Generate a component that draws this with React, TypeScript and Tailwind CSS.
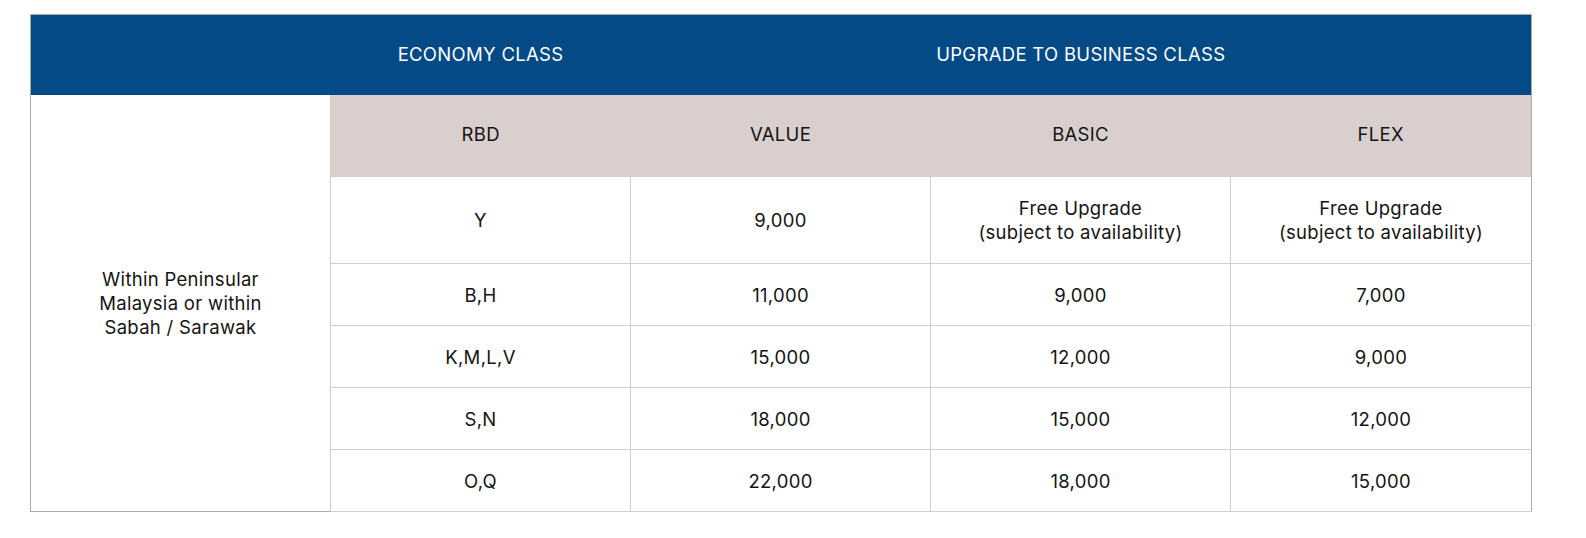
import React from 'react';

const rows = [
  { rbd: 'Y', value: '9,000', basic: 'free', flex: 'free' },
  { rbd: 'B,H', value: '11,000', basic: '9,000', flex: '7,000' },
  { rbd: 'K,M,L,V', value: '15,000', basic: '12,000', flex: '9,000' },
  { rbd: 'S,N', value: '18,000', basic: '15,000', flex: '12,000' },
  { rbd: 'O,Q', value: '22,000', basic: '18,000', flex: '15,000' },
];

const Cell = ({ v }: { v: string }) =>
  v === 'free' ? (
    <>
      Free Upgrade
      <br />
      (subject to availability)
    </>
  ) : (
    <>{v}</>
  );

export default function App() {
  return (
    <div className="min-h-[538px] bg-white pt-[14px] pl-[30px] font-['Inter','Liberation_Sans',sans-serif] text-[18.5px] tracking-[0.3px] text-[#141414]">
      <table className="w-[1501px] table-fixed border-collapse border border-[#ababab]">
        <colgroup>
          <col className="w-[300px]" />
          <col className="w-[300px]" />
          <col className="w-[300px]" />
          <col className="w-[300px]" />
          <col className="w-[301px]" />
        </colgroup>
        <thead>
          <tr className="h-[80px] bg-[#034a87] text-white">
            <th className="font-normal"></th>
            <th className="font-normal">ECONOMY CLASS</th>
            <th colSpan={3} className="font-normal">UPGRADE TO BUSINESS CLASS</th>
          </tr>
        </thead>
        <tbody>
          <tr className="h-[82px]">
            <td rowSpan={6} className="border-r border-[#cfcfcf] bg-white text-center leading-[24px]">
              Within Peninsular
              <br />
              Malaysia or within
              <br />
              Sabah / Sarawak
            </td>
            <td className="bg-[#d9cfcf] text-center">RBD</td>
            <td className="bg-[#d9cfcf] text-center">VALUE</td>
            <td className="bg-[#d9cfcf] text-center">BASIC</td>
            <td className="bg-[#d9cfcf] text-center">FLEX</td>
          </tr>
          {rows.map((r, i) => (
            <tr key={r.rbd} className={i === 0 ? 'h-[87px]' : 'h-[62px]'}>
              <td className="border border-[#cfcfcf] text-center leading-[24px]">{r.rbd}</td>
              <td className="border border-[#cfcfcf] text-center leading-[24px]">{r.value}</td>
              <td className="border border-[#cfcfcf] text-center leading-[24px]"><Cell v={r.basic} /></td>
              <td className="border border-[#cfcfcf] border-r-[#ababab] text-center leading-[24px]"><Cell v={r.flex} /></td>
            </tr>
          ))}
        </tbody>
      </table>
    </div>
  );
}
